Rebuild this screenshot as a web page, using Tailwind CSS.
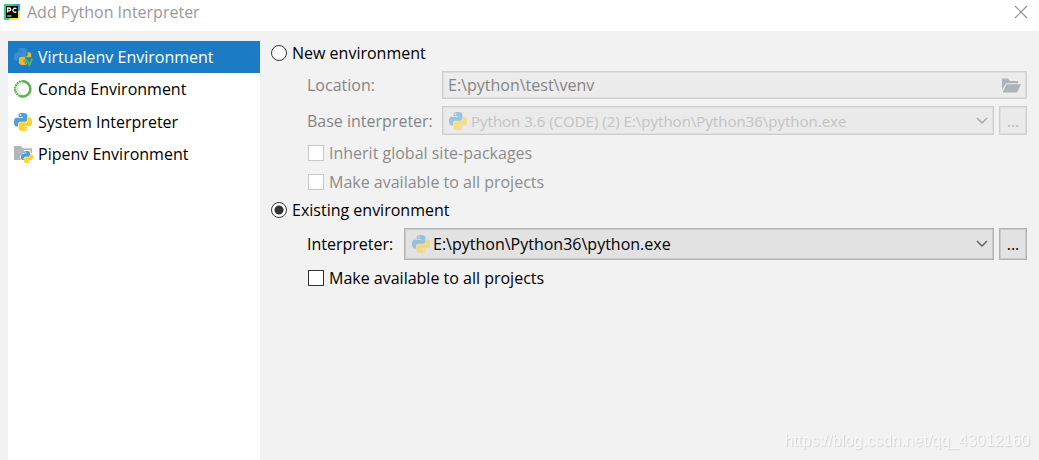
<!DOCTYPE html>
<html lang="en">
<head>
<meta charset="utf-8">
<meta name="viewport" content="width=device-width, initial-scale=1">
<title>Add Python Interpreter</title>
<script src="https://cdn.jsdelivr.net/npm/@tailwindcss/browser@4"></script>
</head>
<body class="flex min-h-screen flex-col bg-[#f2f2f2] font-['Open_Sans','Noto_Sans',sans-serif] text-base leading-5 text-black">
<svg class="hidden" aria-hidden="true">
  <symbol id="snake" viewBox="0 0 24 24">
    <path d="M14.25.18l.9.2.73.26.59.3.45.32.34.34.25.34.16.33.1.3.04.26.02.2-.01.13V8.5l-.05.63-.13.55-.21.46-.26.38-.3.31-.33.25-.35.19-.35.14-.33.1-.3.07-.26.04-.21.02H8.77l-.69.05-.59.14-.5.22-.41.27-.33.32-.27.35-.2.36-.15.37-.1.35-.07.32-.04.27-.02.21v3.06H3.17l-.21-.03-.28-.07-.32-.12-.35-.18-.36-.26-.36-.36-.35-.46-.32-.59-.28-.73-.21-.88-.14-1.05-.05-1.23.06-1.22.16-1.04.24-.87.32-.71.36-.57.4-.44.42-.33.42-.24.4-.16.36-.1.32-.05.24-.01h.16l.06.01h8.16v-.83H6.18l-.01-2.75-.02-.37.05-.34.11-.31.17-.28.25-.26.31-.23.38-.2.44-.18.51-.15.58-.12.64-.1.71-.06.77-.04.84-.02 1.27.05zm-6.3 1.98l-.23.33-.08.41.08.41.23.34.33.22.41.09.41-.09.33-.22.23-.34.08-.41-.08-.41-.23-.33-.33-.22-.41-.09-.41.09z"/>
  </symbol>
  <symbol id="python" viewBox="0 0 24 24">
    <use href="#snake" width="24" height="24" fill="#4f9fd3"/>
    <use href="#snake" width="24" height="24" fill="#fed22b" transform="rotate(180 12 12)"/>
  </symbol>
</svg>

<header class="flex h-[31px] items-start justify-between bg-white pr-[11px] pl-1">
  <div class="flex items-start gap-[7px] pt-1">
    <svg class="size-4" viewBox="0 0 16 16" aria-hidden="true">
      <path fill="#21d789" d="M0 0h11L5 16H0z"/>
      <path fill="#1ba8dc" d="M10 0h6v7l-5 3z"/>
      <path fill="#f5ea45" d="M16 6v8l-3 2H5l2-5z"/>
      <path fill="#000" d="M2 2h12v12H2z"/>
      <path fill="none" stroke="#fff" stroke-width="1.3" d="M3.6 8.6V4h1.7a1.4 1.4 0 0 1 0 2.9H3.8M12.3 4.8a2 2 0 1 0 0 2.9"/>
      <path fill="#fff" d="M3.2 11.5h4.4v1H3.2z"/>
    </svg>
    <h1 class="-mt-0.5 text-[#999]">Add Python Interpreter</h1>
  </div>
  <button type="button" aria-label="Close" class="pt-[5px]">
    <svg class="size-3.5" viewBox="0 0 14 14" fill="none" stroke="#8c8c8c" stroke-width="1.1"><path d="M1 1l12 12M13 1L1 13"/></svg>
  </button>
</header>

<div class="flex flex-1 pt-2.5 pr-3 pl-2">
  <nav class="w-[252px] shrink-0 bg-white" aria-label="Environment types">
    <a href="#virtualenv" aria-current="page" class="flex h-8 items-center gap-1.5 bg-[#1b7cc5] pl-1.5 text-white">
      <svg class="size-[18px] overflow-visible" viewBox="0 0 18 18" aria-hidden="true">
        <use href="#snake" width="17" height="17" fill="#3c8ed2"/>
        <use href="#snake" width="17" height="17" fill="#e7bd22" transform="rotate(180 8.75 8.5)"/>
        <path d="M10.8 9.2h8v9h-5z" fill="#1b7cc5"/>
        <path d="M12.4 10.6l2.9 6.6 2.9-6.6" fill="none" stroke="#4fbc55" stroke-width="1.7"/>
      </svg>
      Virtualenv Environment</a>
    <a href="#conda" class="flex h-8 items-center gap-1.5 pl-1.5">
      <svg class="size-[18px]" viewBox="0 0 18 18" fill="none" stroke="#58b548" aria-hidden="true">
        <path d="M9 1.3a7.6 7.6 0 1 1-3 14.7" stroke-width="2.5"/>
        <path d="M9 1.3a7.6 7.6 0 0 0-3 14.7" stroke-width="2.3" stroke-dasharray="1.8 .6"/>
        <path d="M9 3.4a5.6 5.6 0 0 0-2 10.8" stroke="#a8d89f" stroke-width="1" stroke-dasharray="1 1"/>
      </svg>
      Conda Environment</a>
    <a href="#system" class="flex h-[33px] items-center gap-1.5 pl-1.5">
      <svg class="size-[18px]" aria-hidden="true"><use href="#python"/></svg>
      System Interpreter</a>
    <a href="#pipenv" class="flex h-8 items-center gap-1.5 pl-1.5">
      <svg class="size-[18px] overflow-visible" viewBox="0 0 18 18" aria-hidden="true">
        <path fill="#b1b7bd" d="M0 1h7l2 2.2h9V15H0z"/>
        <path fill="#fff" d="M10 5h6l1 3h2v8H7l-1-5 4-3z"/>
        <use href="#python" x="7" y="6" width="12" height="12"/>
      </svg>
      Pipenv Environment</a>
  </nav>

  <main class="min-w-0 flex-1 pl-[11px]">
    <form>
      <label class="flex h-6 w-fit items-center gap-[5px]">
        <input type="radio" name="env" class="size-4 appearance-none rounded-full border border-[#333] bg-white checked:bg-[radial-gradient(circle,#333_0_4px,white_5px)]">
        New environment</label>

      <div class="pl-9">
        <div class="mt-1.5 flex h-7 items-center text-[#858585]">
          <label for="location" class="w-[135px] shrink-0">Location:</label>
          <div class="relative h-7 flex-1">
            <input id="location" type="text" disabled value="E:\python\test\venv" class="h-7 w-full border border-[#cfcfcf] bg-[#ececec] pr-8 pl-[5px] text-[#858585] shadow-[inset_0_0_0_1px_#dedede]">
            <button type="button" disabled aria-label="Browse" class="absolute top-[7px] right-1.5">
              <svg class="h-4 w-[19px]" viewBox="0 0 19 16" fill="#adb3ba"><path d="M0 .5h6l2 2.5h8v2.2H4L0 12z"/><path d="M4.6 6.2H19L15 14.5H.6z"/></svg>
            </button>
          </div>
        </div>

        <div class="mt-[7px] flex h-[29px] items-center gap-[5px] text-[#858585]">
          <label for="base" class="w-[130px] shrink-0">Base interpreter:</label>
          <div class="relative h-[29px] min-w-0 flex-1">
            <select id="base" disabled class="h-[29px] w-full appearance-none border border-[#cfcfcf] bg-[#eaeaea] pr-8 pl-7 text-[15px] text-[#c3c3c3] opacity-100 shadow-[inset_0_0_0_1px_#dedede]">
              <option>Python 3.6 (CODE) (2) E:\python\Python36\python.exe</option>
            </select>
            <svg class="pointer-events-none absolute top-1.5 left-[7px] size-[18px] opacity-50" aria-hidden="true"><use href="#python"/></svg>
            <svg class="pointer-events-none absolute top-[11px] right-1.5 h-2 w-3" viewBox="0 0 12 8" fill="none" stroke="#a3a3a8" stroke-width="1.4" aria-hidden="true"><path d="M1 1l5 5 5-5"/></svg>
          </div>
          <button type="button" disabled aria-label="Choose base interpreter" class="h-[29px] w-7 border border-[#cfcfcf] bg-[#eaeaea] text-[#b5b5b5] shadow-[inset_0_0_0_1px_#dedede]">...</button>
        </div>

        <label class="mt-[7px] flex h-[22px] w-fit items-center gap-[5px] pl-px text-[#8c8c8c]">
          <input type="checkbox" disabled class="size-4 appearance-none border border-[#c8c8c8] bg-white">
          Inherit global site-packages</label>
        <label class="mt-[7px] flex h-[22px] w-fit items-center gap-[5px] pl-px text-[#8c8c8c]">
          <input type="checkbox" disabled class="size-4 appearance-none border border-[#c8c8c8] bg-white">
          Make available to all projects</label>
      </div>

      <label class="mt-[5px] flex h-6 w-fit items-center gap-[5px]">
        <input type="radio" name="env" checked class="size-4 appearance-none rounded-full border border-[#333] bg-white checked:bg-[radial-gradient(circle,#333_0_4px,white_5px)]">
        Existing environment</label>

      <div class="pl-9">
        <div class="mt-1.5 flex h-8 items-center gap-[5px]">
          <label for="interp" class="w-[92px] shrink-0">Interpreter:</label>
          <div class="relative h-8 min-w-0 flex-1">
            <select id="interp" class="h-8 w-full appearance-none border border-[#b3b3b3] bg-[#e2e2e2] pr-8 pl-7 shadow-[inset_0_0_0_1px_#cacaca]">
              <option>E:\python\Python36\python.exe</option>
            </select>
            <svg class="pointer-events-none absolute top-[7px] left-2 size-[18px] opacity-50" aria-hidden="true"><use href="#python"/></svg>
            <svg class="pointer-events-none absolute top-3 right-1.5 h-2 w-3" viewBox="0 0 12 8" fill="none" stroke="#5c5c62" stroke-width="1.4" aria-hidden="true"><path d="M1 1l5 5 5-5"/></svg>
          </div>
          <button type="button" aria-label="Choose interpreter" class="h-8 w-7 border border-[#b3b3b3] bg-[#e2e2e2] shadow-[inset_0_0_0_1px_#cacaca]">...</button>
        </div>
        <label class="mt-[7px] flex h-[22px] w-fit items-center gap-[5px] pl-px">
          <input type="checkbox" class="size-4 appearance-none border border-[#333] bg-white">
          Make available to all projects</label>
      </div>
    </form>
  </main>
</div>
<footer class="fixed right-[9px] bottom-[9px] font-['Liberation_Sans',sans-serif] text-base leading-5 text-[#f8f8f8] [text-shadow:1px_1px_1px_#d2d2d2]">https://blog.csdn.net/qq_43012160</footer>
</body>
</html>
